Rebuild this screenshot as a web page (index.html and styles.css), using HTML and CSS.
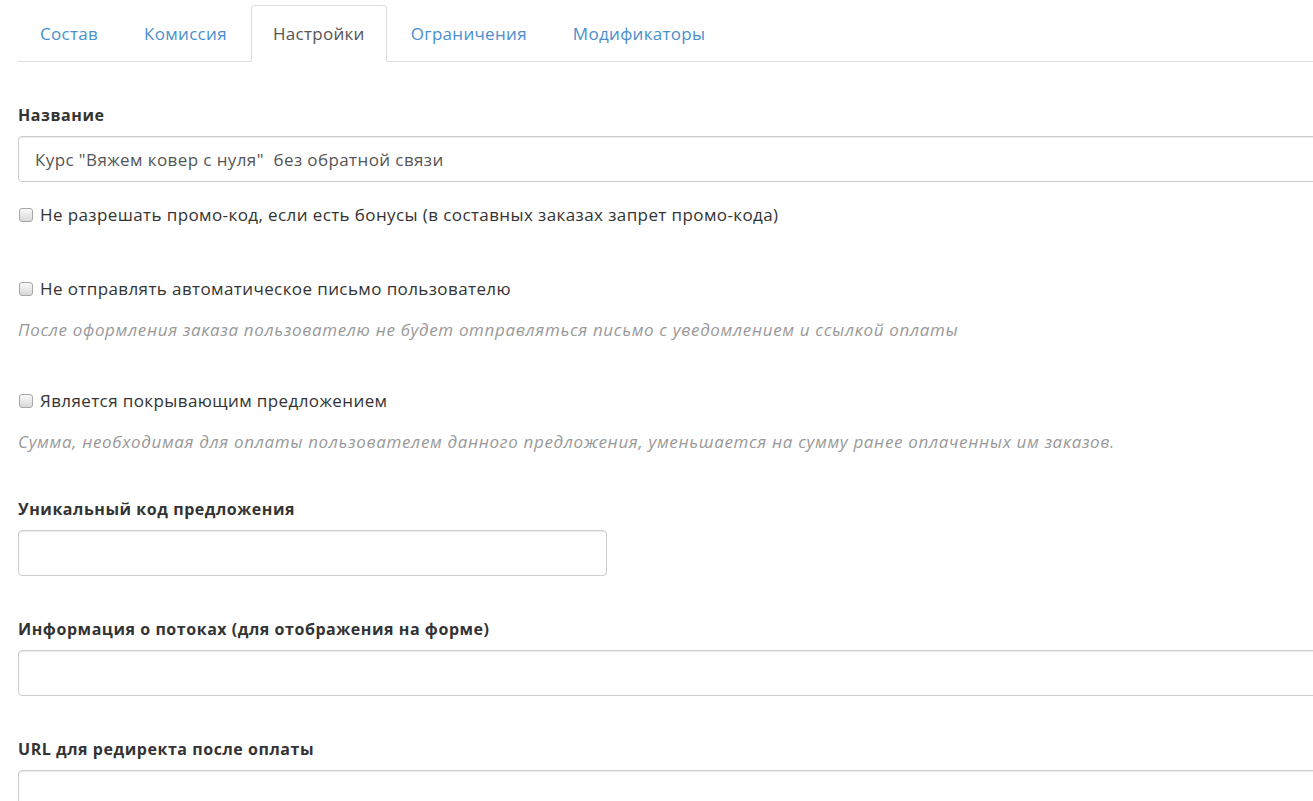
FILE: index.html
```html
<!DOCTYPE html>
<html lang="ru">
<head>
  <meta charset="UTF-8">
  <meta name="viewport" content="width=device-width, initial-scale=1.0">
  <title>Настройки предложения</title>
  <link rel="stylesheet" href="styles.css">
</head>
<body>
  <div class="page">
    <ul class="tabs">
      <li><a href="#">Состав</a></li>
      <li><a href="#">Комиссия</a></li>
      <li class="active"><a href="#">Настройки</a></li>
      <li><a href="#">Ограничения</a></li>
      <li><a href="#">Модификаторы</a></li>
    </ul>

    <form class="settings">
      <div class="group first">
        <label class="label">Название</label>
        <input class="field" type="text" value='Курс "Вяжем ковер с нуля"  без обратной связи'>
      </div>

      <div class="check">
        <label><input type="checkbox"> Не разрешать промо-код, если есть бонусы (в составных заказах запрет промо-кода)</label>
      </div>

      <div class="check">
        <label><input type="checkbox"> Не отправлять автоматическое письмо пользователю</label>
        <p class="hint">После оформления заказа пользователю не будет отправляться письмо с уведомлением и ссылкой оплаты</p>
      </div>

      <div class="check last">
        <label><input type="checkbox"> Является покрывающим предложением</label>
        <p class="hint">Сумма, необходимая для оплаты пользователем данного предложения, уменьшается на сумму ранее оплаченных им заказов.</p>
      </div>

      <div class="group">
        <label class="label">Уникальный код предложения</label>
        <input class="field short" type="text">
      </div>

      <div class="group">
        <label class="label">Информация о потоках (для отображения на форме)</label>
        <input class="field" type="text">
      </div>

      <div class="group">
        <label class="label">URL для редиректа после оплаты</label>
        <input class="field" type="text">
      </div>
    </form>
  </div>
</body>
</html>
```

FILE: styles.css
```css
* {
  margin: 0;
  padding: 0;
  box-sizing: border-box;
}
html, body {
  overflow: hidden;
}
body {
  font-family: "Open Sans", "Noto Sans", Arial, sans-serif;
  font-size: 17px;
  letter-spacing: 0.4px;
  color: #333;
  background: #fff;
}
.page {
  width: 1340px;
  margin-left: 18px;
  padding-top: 5px;
}

/* вкладки */
.tabs {
  list-style: none;
  display: flex;
  border-bottom: 1px solid #ddd;
}
.tabs li {
  margin-right: 2px;
  margin-bottom: -1px;
}
.tabs a {
  display: block;
  height: 57px;
  line-height: 55px;
  padding: 0 21px;
  letter-spacing: 0.3px;
  color: #4a8fcd;
  text-decoration: none;
  border: 1px solid transparent;
  border-radius: 4px 4px 0 0;
}
.tabs .active a {
  color: #555;
  background: #fff;
  border-color: #ddd #ddd transparent;
}

/* форма */
.settings {
  padding-top: 42px;
}
.group {
  margin-bottom: 42px;
}
.group.first {
  margin-bottom: 22px;
}
.label {
  display: block;
  font-weight: 700;
  font-size: 16px;
  letter-spacing: 0.55px;
  line-height: 22px;
  margin-bottom: 10px;
}
.field {
  display: block;
  width: 100%;
  height: 46px;
  padding: 0 16px;
  font-family: inherit;
  font-size: 17px;
  letter-spacing: 0.4px;
  color: #555;
  border: 1px solid #ccc;
  border-radius: 4px;
  box-shadow: inset 0 1px 1px rgba(0,0,0,.075);
  outline: none;
}
.field.short {
  width: 589px;
}

.check {
  margin-bottom: 52px;
}
.check .hint {
  margin-bottom: -3px;
}
.check.last {
  margin-bottom: 45px;
}
.check.last .hint {
  margin-bottom: 0;
}
.check label {
  display: flex;
  align-items: center;
  gap: 7px;
  line-height: 22px;
}
.check input {
  appearance: none;
  -webkit-appearance: none;
  flex: none;
  width: 14px;
  height: 14px;
  margin-left: 1px;
  border: 1px solid #a6a6a6;
  border-radius: 3px;
  background: linear-gradient(#fafafa, #d8d8d8);
}
.hint {
  margin-top: 19px;
  font-style: italic;
  font-size: 17px;
  letter-spacing: 0.65px;
  line-height: 22px;
  color: #999;
}
```
